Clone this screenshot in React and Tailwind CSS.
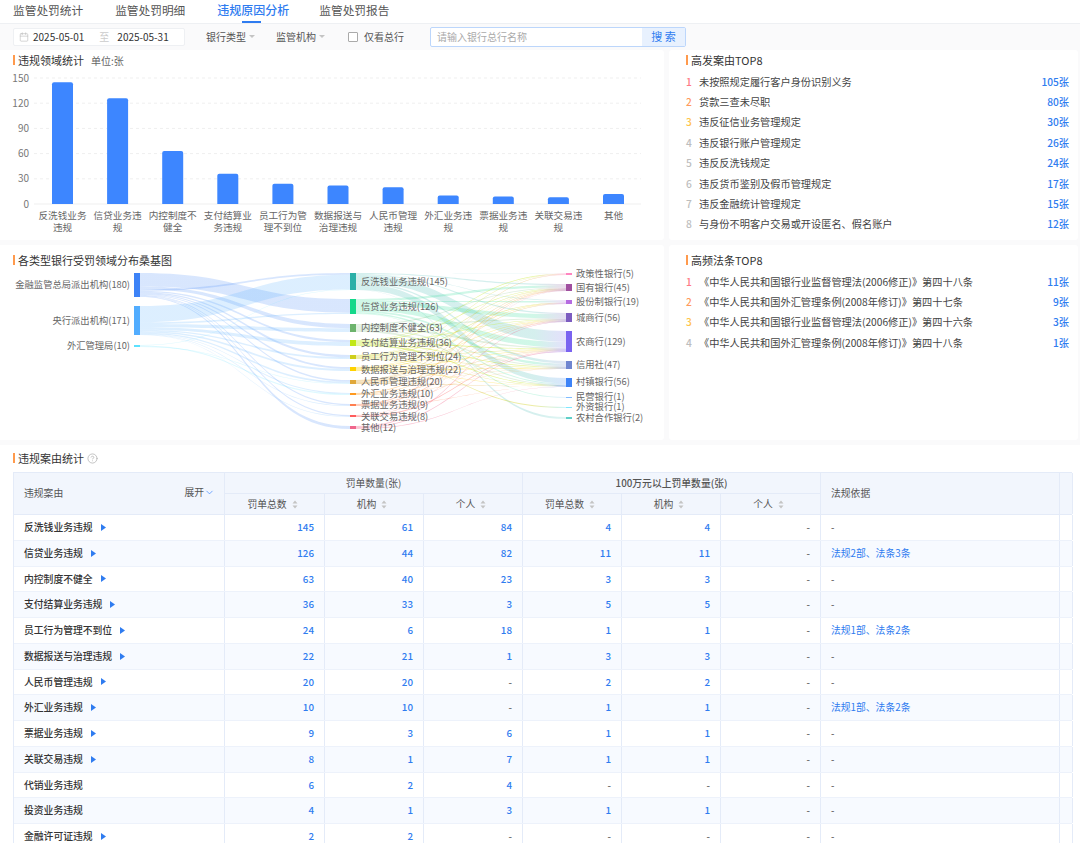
import { Calendar, ChevronDown, CircleHelp } from 'lucide-react';

const BLUE = '#3d86ff';
const AXIS_TICKS = [0, 30, 60, 90, 120, 150];

const BARS = [
  { value: 145, lines: ['反洗钱业务', '违规'] },
  { value: 126, lines: ['信贷业务违', '规'] },
  { value: 63, lines: ['内控制度不', '健全'] },
  { value: 36, lines: ['支付结算业', '务违规'] },
  { value: 24, lines: ['员工行为管', '理不到位'] },
  { value: 22, lines: ['数据报送与', '治理违规'] },
  { value: 20, lines: ['人民币管理', '违规'] },
  { value: 10, lines: ['外汇业务违', '规'] },
  { value: 9, lines: ['票据业务违', '规'] },
  { value: 8, lines: ['关联交易违', '规'] },
  { value: 12, lines: ['其他'] },
];

const CASES = [
  ['未按照规定履行客户身份识别义务', '105张'],
  ['贷款三查未尽职', '80张'],
  ['违反征信业务管理规定', '30张'],
  ['违反银行账户管理规定', '26张'],
  ['违反反洗钱规定', '24张'],
  ['违反货币鉴别及假币管理规定', '17张'],
  ['违反金融统计管理规定', '15张'],
  ['与身份不明客户交易或开设匿名、假名账户', '12张'],
];

const LAWS = [
  ['《中华人民共和国银行业监督管理法(2006修正)》第四十八条', '11张'],
  ['《中华人民共和国外汇管理条例(2008年修订)》第四十七条', '9张'],
  ['《中华人民共和国银行业监督管理法(2006修正)》第四十六条', '3张'],
  ['《中华人民共和国外汇管理条例(2008年修订)》第四十八条', '1张'],
];

const RANK_COLORS = ['text-[#ff7a85]', 'text-[#ff9a5c]', 'text-[#ffc44d]', 'text-[#bdbdbd]', 'text-[#bdbdbd]', 'text-[#bdbdbd]', 'text-[#bdbdbd]', 'text-[#bdbdbd]'];

const LEFT_NODES = [
  { label: '金融监管总局派出机构(180)', y: 273, h: 24, color: '#3d83f7', ty: 285 },
  { label: '央行派出机构(171)', y: 306, h: 29, color: '#52adff', ty: 321 },
  { label: '外汇管理局(10)', y: 345, h: 2, color: '#5ce1ff', ty: 346 },
];

const MID_NODES = [
  { label: '反洗钱业务违规(145)', y: 273, h: 17, color: '#2bb0a8', ty: 282 },
  { label: '信贷业务违规(126)', y: 299, h: 15, color: '#13d88a', ty: 307 },
  { label: '内控制度不健全(63)', y: 324, h: 8, color: '#6cb36c', ty: 328 },
  { label: '支付结算业务违规(36)', y: 340, h: 6, color: '#c2e815', ty: 343 },
  { label: '员工行为管理不到位(24)', y: 355, h: 4, color: '#cfcf1a', ty: 357 },
  { label: '数据报送与治理违规(22)', y: 367, h: 4, color: '#ffd200', ty: 370 },
  { label: '人民币管理违规(20)', y: 380, h: 4, color: '#e0a83a', ty: 382 },
  { label: '外汇业务违规(10)', y: 393, h: 2, color: '#ff9a1f', ty: 394 },
  { label: '票据业务违规(9)', y: 404, h: 2, color: '#ff7f50', ty: 405 },
  { label: '关联交易违规(8)', y: 415, h: 2, color: '#ff5c5c', ty: 417 },
  { label: '其他(12)', y: 426, h: 3, color: '#f0668c', ty: 428 },
];

const RIGHT_NODES = [
  { label: '政策性银行(5)', y: 273, h: 2, color: '#ff85c0', ty: 274 },
  { label: '国有银行(45)', y: 284, h: 7, color: '#a04f9f', ty: 288 },
  { label: '股份制银行(19)', y: 300, h: 4, color: '#b56be0', ty: 302 },
  { label: '城商行(56)', y: 313, h: 9, color: '#7c5cc0', ty: 318 },
  { label: '农商行(129)', y: 331, h: 21, color: '#7a63f0', ty: 342 },
  { label: '信用社(47)', y: 361, h: 8, color: '#6f85d0', ty: 365 },
  { label: '村镇银行(56)', y: 378, h: 9, color: '#3d83f7', ty: 382 },
  { label: '民营银行(1)', y: 397, h: 1, color: '#7fbcff', ty: 397 },
  { label: '外资银行(1)', y: 407, h: 1, color: '#7fe6ff', ty: 407 },
  { label: '农村合作银行(2)', y: 417, h: 2, color: '#5fcfc8', ty: 418 },
];

// [source, target, value], stacked in this order at both ends
const LEFT_LINKS = [
  [0, 1, 100], [0, 2, 22], [0, 0, 12], [0, 3, 8], [0, 4, 10], [0, 5, 7], [0, 6, 6], [0, 8, 5], [0, 9, 4], [0, 10, 6],
  [1, 0, 96], [1, 1, 10], [1, 2, 20], [1, 3, 14], [1, 4, 8], [1, 5, 8], [1, 6, 7], [1, 7, 4], [1, 8, 2], [1, 9, 2],
  [2, 0, 3], [2, 7, 5], [2, 6, 2],
];

const RIGHT_LINKS = [
  [0, 0, 1], [0, 1, 8], [0, 2, 4], [0, 3, 8], [0, 4, 68], [0, 5, 14], [0, 6, 60], [0, 9, 2],
  [1, 1, 16], [1, 2, 7], [1, 3, 28], [1, 4, 36], [1, 5, 14], [1, 6, 12], [1, 7, 1],
  [2, 1, 6], [2, 3, 6], [2, 4, 8], [2, 5, 6], [2, 6, 8],
  [3, 0, 2], [3, 1, 4], [3, 3, 3], [3, 4, 4], [3, 5, 4], [3, 6, 6],
  [4, 0, 1], [4, 1, 3], [4, 2, 3], [4, 3, 2], [4, 4, 3], [4, 5, 2], [4, 6, 4], [4, 8, 1],
  [5, 1, 2], [5, 2, 2], [5, 3, 3], [5, 4, 3], [5, 5, 3], [5, 6, 3],
  [6, 0, 1], [6, 1, 3], [6, 2, 2], [6, 3, 3], [6, 4, 3], [6, 5, 2], [6, 6, 4],
  [7, 1, 3], [7, 3, 2], [7, 4, 1], [7, 5, 1],
  [8, 1, 2], [8, 3, 2], [8, 4, 1], [8, 6, 1],
  [9, 1, 1], [9, 3, 1], [9, 4, 2],
  [10, 1, 1], [10, 3, 3], [10, 4, 4], [10, 6, 2],
];

const ROWS = [
  ['反洗钱业务违规', true, '145', '61', '84', '4', '4', '-', '-'],
  ['信贷业务违规', true, '126', '44', '82', '11', '11', '-', '法规2部、法条3条'],
  ['内控制度不健全', true, '63', '40', '23', '3', '3', '-', '-'],
  ['支付结算业务违规', true, '36', '33', '3', '5', '5', '-', '-'],
  ['员工行为管理不到位', true, '24', '6', '18', '1', '1', '-', '法规1部、法条2条'],
  ['数据报送与治理违规', true, '22', '21', '1', '3', '3', '-', '-'],
  ['人民币管理违规', true, '20', '20', '-', '2', '2', '-', '-'],
  ['外汇业务违规', true, '10', '10', '-', '1', '1', '-', '法规1部、法条2条'],
  ['票据业务违规', true, '9', '3', '6', '1', '1', '-', '-'],
  ['关联交易违规', true, '8', '1', '7', '1', '1', '-', '-'],
  ['代销业务违规', false, '6', '2', '4', '-', '-', '-', '-'],
  ['投资业务违规', false, '4', '1', '3', '1', '1', '-', '-'],
  ['金融许可证违规', true, '2', '2', '-', '-', '-', '-', '-'],
];

function SectionTitle({ children }) {
  return (
    <div className="flex items-center gap-[3px] text-[11px] leading-[14px] text-[#333]">
      <span className="w-[2px] h-[10px] bg-[#ff9a4d]" />
      {children}
    </div>
  );
}

function BarChart() {
  return (
    <svg width="664" height="170" viewBox="0 70 664 170" className="block">
      {AXIS_TICKS.map((tick) => {
        const y = 204 - tick * 0.84;
        return (
          <g key={tick}>
            <line x1="34" x2="641" y1={y} y2={y} stroke="#efefef" strokeWidth="1" strokeDasharray={tick ? '3 3' : undefined} />
            <text x="29" y={y + 3.5} textAnchor="end" fontSize="10" fill="#777">{tick}</text>
          </g>
        );
      })}
      {BARS.map((bar, i) => {
        const cx = 62.5 + i * 55.1;
        const h = bar.value * 0.84;
        return (
          <g key={i}>
            <path d={`M${cx - 10.5} 204 V${206 - h} q0 -2 2 -2 H${cx + 8.5} q2 0 2 2 V204 Z`} fill={BLUE} />
            {bar.lines.map((line, j) => (
              <text key={j} x={cx} y={219 + j * 11.6} textAnchor="middle" fontSize="9.6" fill="#666">{line}</text>
            ))}
          </g>
        );
      })}
    </svg>
  );
}

// width of each link at each end, scaled so the links fill their node
function layoutLinks(links, sources, targets, x1, x2) {
  const sumOut = sources.map((_, i) => links.filter((l) => l[0] === i).reduce((a, l) => a + l[2], 0));
  const sumIn = targets.map((_, i) => links.filter((l) => l[1] === i).reduce((a, l) => a + l[2], 0));
  const outY = sources.map((n) => n.y);
  const inY = targets.map((n) => n.y);
  return links.map(([s, t, v]) => {
    const h1 = (v * sources[s].h) / sumOut[s];
    const h2 = (v * targets[t].h) / sumIn[t];
    const y1 = outY[s];
    const y2 = inY[t];
    outY[s] += h1;
    inY[t] += h2;
    const mx = (x1 + x2) / 2;
    const d = `M${x1} ${y1} C${mx} ${y1} ${mx} ${y2} ${x2} ${y2} V${y2 + h2} C${mx} ${y2 + h2} ${mx} ${y1 + h1} ${x1} ${y1 + h1} Z`;
    return { d, s, from: sources[s].color, to: targets[t].color, x1, x2 };
  });
}

const LINK_SHAPES = [
  ...layoutLinks(LEFT_LINKS, LEFT_NODES, MID_NODES, 140, 350).map((l) => ({ ...l, to: l.from, opacity: 0.2 })),
  ...layoutLinks(RIGHT_LINKS, MID_NODES, RIGHT_NODES, 356, 566).map((l) => ({ ...l, opacity: l.s < 3 ? 0.2 : 0.4 })),
];

function Sankey() {
  return (
    <svg width="664" height="178" viewBox="0 262 664 178" className="block">
      <defs>
        {LINK_SHAPES.map((l, i) => (
          <linearGradient key={i} id={`link-${i}`} gradientUnits="userSpaceOnUse" x1={l.x1} x2={l.x2} y1="0" y2="0">
            <stop offset="0" stopColor={l.from} />
            <stop offset="0.85" stopColor={l.from} />
            <stop offset="1" stopColor={l.to} />
          </linearGradient>
        ))}
      </defs>
      {LINK_SHAPES.map((l, i) => (
        <path key={i} d={l.d} fill={`url(#link-${i})`} fillOpacity={l.opacity} />
      ))}
      {LEFT_NODES.map((n) => (
        <g key={n.label}>
          <rect x="134" y={n.y} width="6" height={n.h} fill={n.color} />
          <text x="130" y={n.ty + 3} textAnchor="end" fontSize="9.3" fill="#666">{n.label}</text>
        </g>
      ))}
      {MID_NODES.map((n) => (
        <g key={n.label}>
          <rect x="350" y={n.y} width="6" height={n.h} fill={n.color} />
          <text x="361" y={n.ty + 3} fontSize="9.3" fill="#666">{n.label}</text>
        </g>
      ))}
      {RIGHT_NODES.map((n) => (
        <g key={n.label}>
          <rect x="566" y={n.y} width="6" height={n.h} fill={n.color} />
          <text x="576" y={n.ty + 3} fontSize="9.3" fill="#666">{n.label}</text>
        </g>
      ))}
    </svg>
  );
}

function RankList({ items }) {
  return (
    <div className="mt-[4px] flex flex-col">
      {items.map(([name, count], i) => (
        <div key={name} className="flex items-center h-[20.4px] text-[10.2px] text-[#444]">
          <span className={`w-[13px] font-medium ${RANK_COLORS[i]}`}>{i + 1}</span>
          <span className="flex-1">{name}</span>
          <span className="text-[#2f7cf0] font-medium">{count}</span>
        </div>
      ))}
    </div>
  );
}

function SortIcon() {
  return (
    <svg width="6" height="9" viewBox="0 0 6 9" className="ml-[5px]">
      <path d="M3 0.5 L5.5 3.5 H0.5 Z M3 8.5 L0.5 5.5 H5.5 Z" fill="#c4c4c4" />
    </svg>
  );
}

function HeadCell({ children }) {
  return (
    <div className="flex items-center justify-center h-[20px] pr-[4px] border-r border-[#e4ebf8] text-[9.8px] text-[#555]">
      {children}
      <SortIcon />
    </div>
  );
}

function CaseTable() {
  const cols = 'grid grid-cols-[211px_100px_99px_99px_99px_99px_100px_239px_13px]';
  return (
    <div className="w-[1059px] mt-[7px] border-t border-l border-[#e4ebf8] text-[9.8px]">
      {/* header */}
      <div className={`${cols} grid-rows-[21px_20px] bg-[#f2f6fd] border-b border-[#e4ebf8]`}>
        <div className="row-span-2 flex items-center justify-between pl-[10px] pr-[9px] border-r border-[#e4ebf8] text-[#555]">
          <span>违规案由</span>
          <span className="flex items-center -mt-[2px]">
            展开<ChevronDown size={11} color="#3d86ff" strokeWidth={1.5} />
          </span>
        </div>
        <div className="col-span-3 flex items-center justify-center border-r border-b border-[#e4ebf8] text-[#555]">罚单数量(张)</div>
        <div className="col-span-3 flex items-center justify-center border-r border-b border-[#e4ebf8] text-[#555] font-medium">100万元以上罚单数量(张)</div>
        <div className="row-span-2 flex items-center pl-[10px] border-r border-[#e4ebf8] text-[#555]">法规依据</div>
        <div className="row-span-2 border-r border-[#e4ebf8]" />
        <HeadCell>罚单总数</HeadCell>
        <HeadCell>机构</HeadCell>
        <HeadCell>个人</HeadCell>
        <HeadCell>罚单总数</HeadCell>
        <HeadCell>机构</HeadCell>
        <HeadCell>个人</HeadCell>
      </div>
      {/* rows */}
      {ROWS.map((row, i) => (
        <div key={row[0]} className={`${cols} h-[25.75px] border-b border-[#edf2fb] ${i % 2 ? 'bg-[#f7faff]' : 'bg-white'}`}>
          <div className="flex items-center gap-[8px] pl-[10px] border-r border-[#e4ebf8] text-[#333] font-medium">
            {row[0]}
            {row[1] && (
              <svg width="5" height="7" viewBox="0 0 5 7">
                <path d="M0 0 L5 3.5 L0 7 Z" fill="#2f7cf0" />
              </svg>
            )}
          </div>
          {row.slice(2, 8).map((cell, j) => (
            <div key={j} className={`flex items-center justify-end pr-[10px] border-r border-[#e4ebf8] font-medium ${cell === '-' ? 'text-[#666]' : 'text-[#2f7cf0]'}`}>
              {cell}
            </div>
          ))}
          <div className={`flex items-center pl-[10px] border-r border-[#e4ebf8] ${row[8] === '-' ? 'text-[#444]' : 'text-[#2f7cf0]'}`}>{row[8]}</div>
          <div className="border-r border-[#e4ebf8]" />
        </div>
      ))}
    </div>
  );
}

export default function App() {
  return (
    <div className="w-[1080px] h-[843px] overflow-hidden bg-[#fafafb] font-['Noto_Sans_CJK_SC',sans-serif]">
      {/* tabs */}
      <div className="flex h-[24px] gap-[32px] pl-[13px] bg-white border-b border-[#eef0f3] text-[11.7px] text-[#555]">
        <span className="leading-[20px]">监管处罚统计</span>
        <span className="leading-[20px]">监管处罚明细</span>
        <span className="relative leading-[20px] text-[12px] -mr-[2px] text-[#2f7cf0] font-medium">
          违规原因分析
          <span className="absolute left-[25px] bottom-0 w-[19px] h-[2px] bg-[#2f7cf0]" />
        </span>
        <span className="leading-[20px]">监管处罚报告</span>
      </div>

      {/* filters */}
      <div className="flex items-center h-[26px] pb-[1px] pl-[13px] text-[10px] text-[#555]">
        <div className="flex items-center w-[172px] h-[18px] pl-[5px] bg-white border border-[#eef0f3] rounded-[2px] text-[#333]">
          <Calendar size={10} color="#bbb" strokeWidth={1.5} />
          <span className="ml-[4px]">2025-05-01</span>
          <span className="ml-[15px] text-[#ccc]">至</span>
          <span className="ml-[8px]">2025-05-31</span>
        </div>
        <span className="ml-[21px]">银行类型</span>
        <span className="ml-[3px] border-x-[3px] border-t-[3px] border-x-transparent border-t-[#c4c4c4]" />
        <span className="ml-[21px]">监管机构</span>
        <span className="ml-[3px] border-x-[3px] border-t-[3px] border-x-transparent border-t-[#c4c4c4]" />
        <span className="ml-[23px] w-[10px] h-[10px] bg-white border border-[#aaa] rounded-[1px]" />
        <span className="ml-[6px]">仅看总行</span>
        <div className="ml-[26px] flex items-center w-[256px] h-[20px] bg-white border border-[#bcd6fb] rounded-[2px]">
          <span className="flex-1 pl-[6px] text-[#aaa]">请输入银行总行名称</span>
          <span className="flex items-center justify-center w-[43px] h-full bg-[#e8f1fe] text-[11px] text-[#2f7cf0]">搜 索</span>
        </div>
      </div>

      <div className="grid grid-cols-[664px_409px] gap-x-[5px] gap-y-[5px]">
        <div className="h-[190px] bg-white rounded-r-[3px]">
          <div className="flex items-center gap-[7px] pl-[13px] h-[20px]">
            <SectionTitle>违规领域统计</SectionTitle>
            <span className="text-[10px] text-[#666]">单位:张</span>
          </div>
          <BarChart />
        </div>
        <div className="h-[190px] bg-white rounded-[3px] pl-[17px] pr-[9px] pt-[3px]">
          <SectionTitle>高发案由TOP8</SectionTitle>
          <RankList items={CASES} />
        </div>
        <div className="h-[195px] bg-white rounded-r-[3px]">
          <div className="pl-[13px] pt-[8px] h-[17px]">
            <SectionTitle>各类型银行受罚领域分布桑基图</SectionTitle>
          </div>
          <Sankey />
        </div>
        <div className="h-[195px] bg-white rounded-[3px] pl-[17px] pr-[9px] pt-[8px]">
          <SectionTitle>高频法条TOP8</SectionTitle>
          <RankList items={LAWS} />
        </div>
      </div>

      {/* case statistics */}
      <div className="mt-[5px] h-[400px] bg-white pl-[13px] pt-[6px]">
        <div className="flex items-center gap-[3px]">
          <SectionTitle>违规案由统计</SectionTitle>
          <CircleHelp size={11} color="#aaa" strokeWidth={1.5} />
        </div>
        <CaseTable />
      </div>
    </div>
  );
}
